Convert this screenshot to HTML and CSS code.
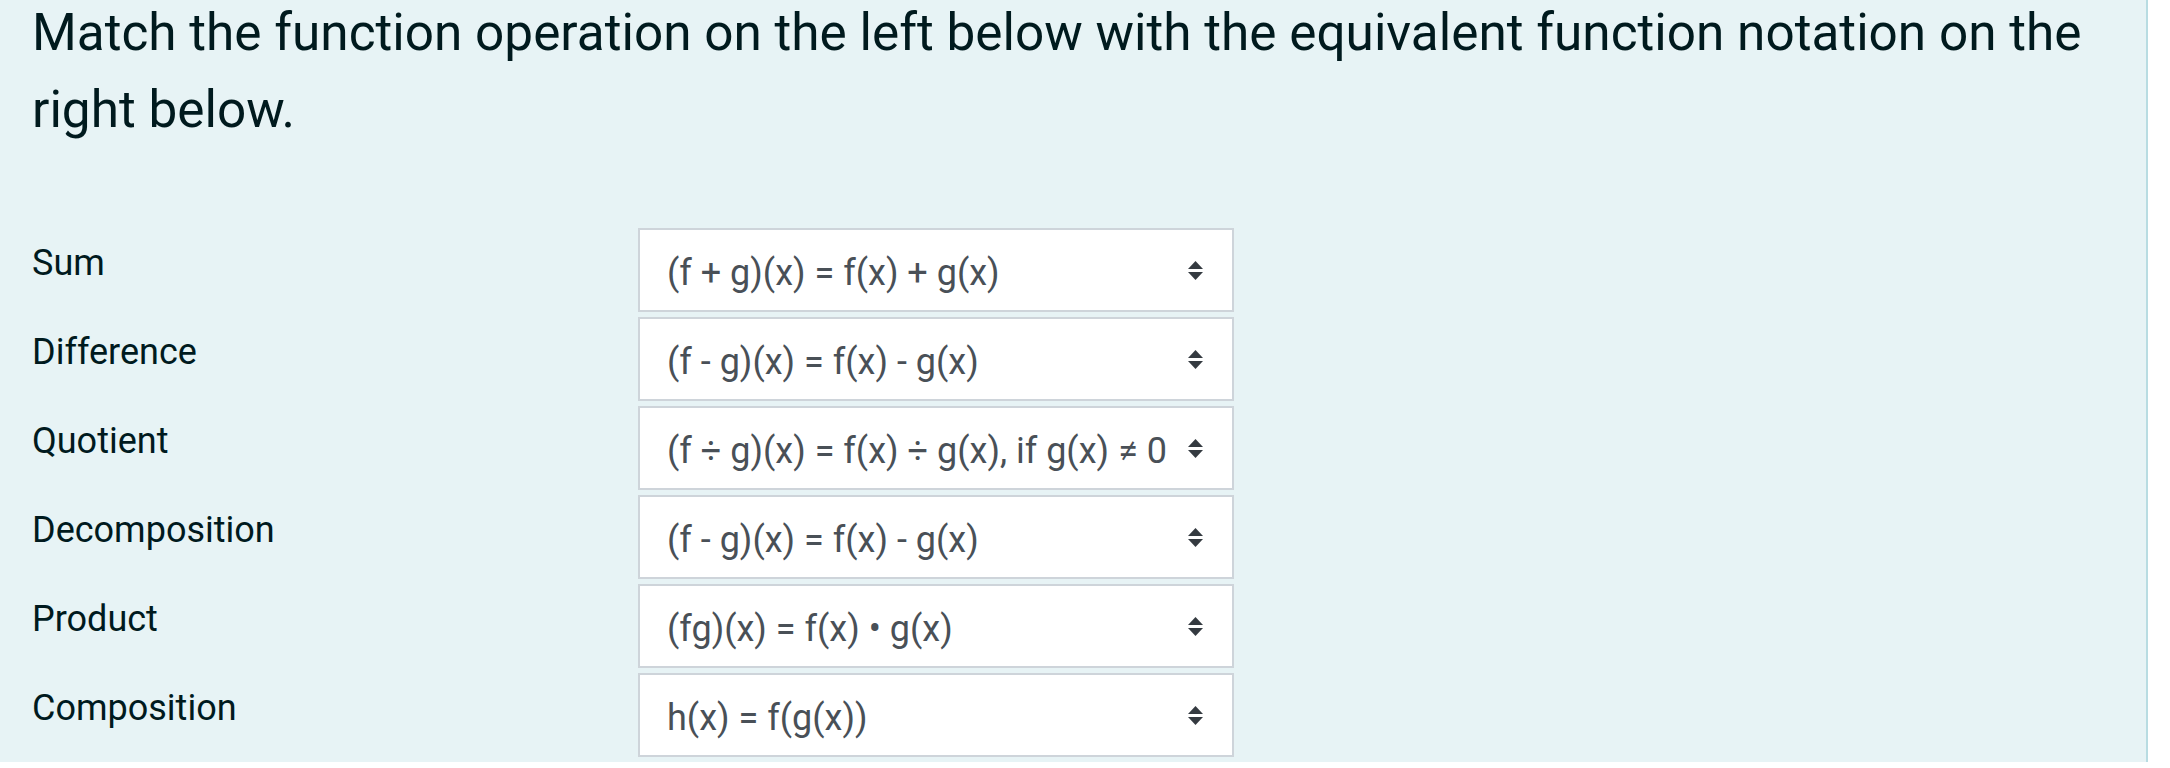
FILE: index.html
```html
<!DOCTYPE html>
<html lang="en">
<head>
<meta charset="utf-8">
<title>Match question</title>
<link rel="stylesheet" href="styles.css">
</head>
<body>
<div class="formulation">
  <p class="qtext">Match the function operation on the left below with the equivalent function notation on the right below.</p>
  <div class="answers">
    <div class="row">
      <div class="label">Sum</div>
      <div class="select"><span class="value">(f + g)(x) = f(x) + g(x)</span><svg class="arrow" viewBox="0 0 15 19" width="15" height="19"><path d="M7.5 0 L15 8 H0 Z M0 11 H15 L7.5 19 Z" fill="#343a40"/></svg></div>
    </div>
    <div class="row">
      <div class="label">Difference</div>
      <div class="select"><span class="value">(f - g)(x) = f(x) - g(x)</span><svg class="arrow" viewBox="0 0 15 19" width="15" height="19"><path d="M7.5 0 L15 8 H0 Z M0 11 H15 L7.5 19 Z" fill="#343a40"/></svg></div>
    </div>
    <div class="row">
      <div class="label">Quotient</div>
      <div class="select"><span class="value">(f ÷ g)(x) = f(x) ÷ g(x), if g(x) ≠ 0</span><svg class="arrow" viewBox="0 0 15 19" width="15" height="19"><path d="M7.5 0 L15 8 H0 Z M0 11 H15 L7.5 19 Z" fill="#343a40"/></svg></div>
    </div>
    <div class="row">
      <div class="label">Decomposition</div>
      <div class="select"><span class="value">(f - g)(x) = f(x) - g(x)</span><svg class="arrow" viewBox="0 0 15 19" width="15" height="19"><path d="M7.5 0 L15 8 H0 Z M0 11 H15 L7.5 19 Z" fill="#343a40"/></svg></div>
    </div>
    <div class="row">
      <div class="label">Product</div>
      <div class="select"><span class="value">(fg)(x) = f(x) • g(x)</span><svg class="arrow" viewBox="0 0 15 19" width="15" height="19"><path d="M7.5 0 L15 8 H0 Z M0 11 H15 L7.5 19 Z" fill="#343a40"/></svg></div>
    </div>
    <div class="row">
      <div class="label">Composition</div>
      <div class="select"><span class="value">h(x) = f(g(x))</span><svg class="arrow" viewBox="0 0 15 19" width="15" height="19"><path d="M7.5 0 L15 8 H0 Z M0 11 H15 L7.5 19 Z" fill="#343a40"/></svg></div>
    </div>
  </div>
</div>
</body>
</html>
```

FILE: styles.css
```css
html, body {
  margin: 0;
  padding: 0;
  background: #ffffff;
  height: 100%;
}
body {
  font-family: Roboto, "Liberation Sans", sans-serif;
  overflow: hidden;
}
.formulation {
  width: 2148px;
  min-height: 768px;
  box-sizing: border-box;
  background: #e7f3f5;
  border-right: 2px solid #b8dce2;
  padding: 0 0 0 32px;
  color: #001a1e;
}
.qtext {
  margin: -6px 0 0 0;
  font-size: 51.3px;
  line-height: 77px;
  color: #001a1e;
}
.answers {
  display: flex;
  flex-direction: column;
  gap: 5px;
  margin-top: 80px;
}
.row {
  display: flex;
  align-items: flex-start;
  height: 84px;
}
.label {
  width: 606px;
  font-size: 36px;
  line-height: 43px;
  padding-top: 14px;
  color: #001a1e;
}
.select {
  width: 596px;
  height: 84px;
  box-sizing: border-box;
  border: 2px solid #ced4da;
  background: #ffffff;
  display: flex;
  align-items: center;
  justify-content: space-between;
  padding: 0 29px 0 27px;
  font-size: 36px;
  color: #495057;
}
.value {
  line-height: 43px;
  padding-top: 6px;
}
.arrow {
  flex: none;
}
```
